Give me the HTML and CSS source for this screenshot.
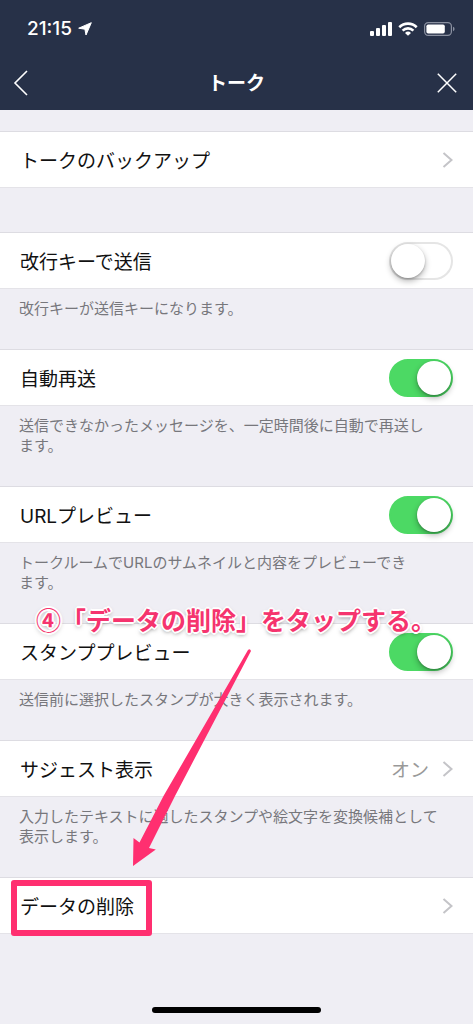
FILE: index.html
```
<!DOCTYPE html>
<html lang="ja">
<head>
    <meta charset="UTF-8">
    <meta name="viewport" content="width=device-width, initial-scale=1.0">
    <title>トーク</title>
    <link rel="stylesheet" href="styles.css">
</head>
<body>
    <header class="header">
        <div class="status-bar">
            <div class="status-left">
                <span class="time">21:15</span>
                <svg width="14" height="14" viewBox="0 0 14 14"><path d="M13.3 0.7 L8 13 L6.9 7.2 L0.7 6.2 Z" fill="#fff" stroke="#fff" stroke-width="1" stroke-linejoin="round"/></svg>
            </div>
            <div class="status-right">
                <svg width="22" height="14" viewBox="0 0 22 14" fill="#fff">
                    <rect x="0" y="9" width="4" height="5" rx="1"/>
                    <rect x="6" y="6" width="4" height="8" rx="1"/>
                    <rect x="12" y="3" width="4" height="11" rx="1"/>
                    <rect x="18" y="0" width="4" height="14" rx="1"/>
                </svg>
                <svg width="20" height="14" viewBox="0 0 20 14" fill="none" stroke="#fff" stroke-width="2.6">
                    <path d="M1.3 5.2 A12.4 12.4 0 0 1 18.7 5.2"/>
                    <path d="M4.6 8.6 A7.7 7.7 0 0 1 15.4 8.6"/>
                    <path d="M10 13.8 L7 10.9 A4.3 4.3 0 0 1 13 10.9 Z" fill="#fff" stroke="none"/>
                </svg>
                <svg width="31" height="14" viewBox="0 0 31 14">
                    <rect x="0.6" y="0.6" width="26.8" height="12.8" rx="3.6" fill="none" stroke="#8a90a0" stroke-width="1.2"/>
                    <rect x="2.4" y="2.4" width="18.4" height="9.2" rx="1.8" fill="#fff"/>
                    <path d="M29 4.8 Q30.6 5.4 30.6 7 Q30.6 8.6 29 9.2 Z" fill="#8a90a0"/>
                </svg>
            </div>
        </div>
        <nav class="nav-bar">
            <button type="button" class="nav-button" aria-label="戻る">
                <svg width="16" height="26" viewBox="0 0 16 26"><path d="M14 1 L2 13 L14 25" fill="none" stroke="#fff" stroke-width="1.6"/></svg>
            </button>
            <h1 class="title">トーク</h1>
            <button type="button" class="nav-button" aria-label="閉じる">
                <svg width="20" height="20" viewBox="0 0 20 20"><path d="M0.8 0.8 L19.2 19.2 M19.2 0.8 L0.8 19.2" stroke="#fff" stroke-width="1.5"/></svg>
            </button>
        </nav>
    </header>

    <main class="settings">
        <section class="group">
            <a href="#" class="row">
                <span>トークのバックアップ</span>
                <svg class="chevron" viewBox="0 0 11 16"><path d="M1.5 1 L9.5 8 L1.5 15"/></svg>
            </a>
        </section>
        <section class="group">
            <label class="row">
                <span>改行キーで送信</span>
                <input type="checkbox" class="switch">
            </label>
            <p class="note">改行キーが送信キーになります。</p>
        </section>
        <section class="group">
            <label class="row">
                <span>自動再送</span>
                <input type="checkbox" class="switch" checked>
            </label>
            <p class="note">送信できなかったメッセージを、一定時間後に自動で再送し<br>ます。</p>
        </section>
        <section class="group">
            <label class="row">
                <span>URLプレビュー</span>
                <input type="checkbox" class="switch" checked>
            </label>
            <p class="note">トークルームでURLのサムネイルと内容をプレビューでき<br>ます。</p>
        </section>
        <section class="group">
            <label class="row">
                <span>スタンププレビュー</span>
                <input type="checkbox" class="switch" checked>
            </label>
            <p class="note">送信前に選択したスタンプが大きく表示されます。</p>
            <div class="callout">④「データの削除」をタップする。</div>
            <svg class="arrow" width="124" height="220" viewBox="0 0 124 220">
                <path d="M119 2 Q121 0 122 3 L46 148 L20 200 L26.8 201.5 L4 218 L4.5 190 L10.5 194.5 L34.5 148 Z"/>
            </svg>
        </section>
        <section class="group">
            <a href="#" class="row">
                <span>サジェスト表示</span>
                <span class="value">オン</span>
                <svg class="chevron" viewBox="0 0 11 16"><path d="M1.5 1 L9.5 8 L1.5 15"/></svg>
            </a>
            <p class="note">入力したテキストに適したスタンプや絵文字を変換候補として<br>表示します。</p>
        </section>
        <section class="group">
            <a href="#" class="row">
                <span class="marked">データの削除</span>
                <svg class="chevron" viewBox="0 0 11 16"><path d="M1.5 1 L9.5 8 L1.5 15"/></svg>
            </a>
        </section>
    </main>

    <div class="home-indicator"></div>
</body>
</html>
```
FILE: styles.css
```
* {
    box-sizing: border-box;
}
body {
    font-family: Inter, "Noto Sans CJK JP", sans-serif;
    background-color: #efeef4;
    color: #111;
    margin: 0;
    min-height: 100vh;
    display: flex;
    flex-direction: column;
}
svg {
    display: block;
    flex: none;
}

/* header */
.header {
    background: #273148;
    color: #fff;
}
.status-bar {
    height: 56px;
    padding: 2px 18px 0 27px;
    display: flex;
    justify-content: space-between;
    align-items: center;
}
.status-left {
    display: flex;
    align-items: center;
    gap: 6px;
}
.time {
    font-size: 19px;
    line-height: 24px;
    font-weight: 500;
}
.status-right {
    display: flex;
    align-items: center;
    gap: 6px;
}
.nav-bar {
    height: 54px;
    padding: 0 13px;
    display: flex;
    justify-content: space-between;
    align-items: center;
}
.nav-button {
    display: flex;
    width: 23px;
    padding: 0;
    border: 0;
    background: none;
    cursor: pointer;
}
.title {
    margin: 0;
    padding-top: 2px;
    font-size: 19px;
    line-height: 24px;
    font-weight: bold;
}

/* settings list */
.settings {
    flex: 1;
    padding-top: 21px;
}
.group {
    position: relative;
}
.group:first-child {
    margin-bottom: 44px;
}
.row {
    height: 57px;
    padding: 0 20px;
    display: flex;
    align-items: center;
    background: #fff;
    border-top: 1px solid #dddce2;
    border-bottom: 1px solid #e4e3e8;
    color: inherit;
    font-size: 19px;
    line-height: 28px;
    text-decoration: none;
    cursor: pointer;
}
.row span {
    padding-top: 4px;
}
.row > :first-child {
    margin-right: auto;
}
.value {
    color: #999;
    margin-right: 13px;
}
.chevron {
    width: 11px;
    height: 16px;
    fill: none;
    stroke: #c4c4c8;
    stroke-width: 2;
}
.note {
    margin: 0;
    padding: 10px 19px 30px;
    color: #77777c;
    font-size: 15px;
    line-height: 20px;
    white-space: nowrap;
}

/* toggle */
.switch {
    appearance: none;
    flex: none;
    display: flex;
    width: 64px;
    height: 38px;
    margin: 0;
    padding: 0;
    border: 2px solid #e5e5e5;
    border-radius: 19px;
    background: #fff;
    cursor: pointer;
}
.switch::before {
    content: "";
    width: 34px;
    height: 34px;
    border-radius: 50%;
    background: #fff;
    box-shadow: 0 3px 6px rgba(0, 0, 0, 0.3), 0 1px 2px rgba(0, 0, 0, 0.2);
}
.switch:checked {
    justify-content: flex-end;
    background: #4cd964;
    border-color: #4cd964;
}

/* guide marks */
.callout {
    position: absolute;
    z-index: 2;
    top: -22px;
    left: 36px;
    color: #f5346e;
    font-family: "Noto Sans CJK JP", sans-serif;
    font-size: 25px;
    line-height: 36px;
    font-weight: bold;
    white-space: nowrap;
    text-shadow: 2px 0 #fff, -2px 0 #fff, 0 2px #fff, 0 -2px #fff, 1px 1px #fff, -1px 1px #fff, 1px -1px #fff, -1px -1px #fff, 0 2px 4px rgba(0, 0, 0, 0.5);
}
.arrow {
    position: absolute;
    z-index: 1;
    top: 25px;
    left: 129px;
    fill: #ff2f70;
    pointer-events: none;
}
.marked {
    position: relative;
}
.marked::after {
    content: "";
    position: absolute;
    inset: -10px -18px -14px -9px;
    border: 6px solid #ff2f70;
    border-radius: 3px;
}

.home-indicator {
    width: 169px;
    height: 6px;
    margin: 0 auto 11px;
    border-radius: 3px;
    background: #000;
}
```
